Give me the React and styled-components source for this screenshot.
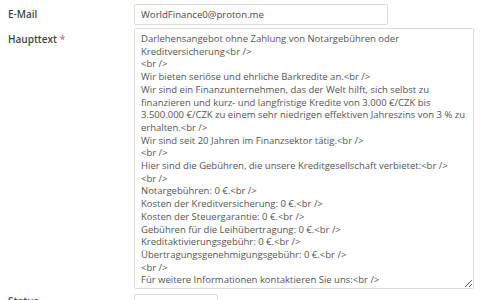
import React from "react";
import styled, { createGlobalStyle } from "styled-components";

const Global = createGlobalStyle`
  html, body { margin: 0; padding: 0; background: #fff; }
  body { font-family: "Open Sans", "Noto Sans", sans-serif; overflow: hidden; }
`;

const Form = styled.div`
  width: 480px;
  height: 300px;
  box-sizing: border-box;
  padding: 4px 6px 0 8px;
  overflow: hidden;
`;

const Row = styled.div`
  display: grid;
  grid-template-columns: 126px 1fr;
  align-items: start;
  margin-bottom: ${(p) => p.$gap || 3}px;
`;

const Label = styled.label`
  font-size: 10px;
  font-weight: 600;
  color: #444;
  line-height: 14px;
  padding-top: ${(p) => p.$top || 0}px;
`;

const Req = styled.span`
  color: #e86a6a;
  font-weight: 600;
`;

const Input = styled.input`
  box-sizing: border-box;
  width: 254px;
  height: 21px;
  border: 1px solid #dcdcdc;
  border-radius: 2px;
  padding: 0 6px;
  font-family: "Open Sans", sans-serif;
  font-size: 9.6px;
  color: #4a4a4a;
  outline: none;
`;

const Area = styled.textarea`
  box-sizing: border-box;
  width: 340px;
  height: 261px;
  border: 1px solid #dcdcdc;
  border-radius: 2px;
  padding: 4px 6px;
  font-family: "Open Sans", sans-serif;
  font-size: 9.5px;
  line-height: 12.7px;
  color: #555;
  white-space: pre;
  overflow-x: hidden;
  overflow-y: scroll;
  outline: none;
  resize: vertical;
  display: block;

  &::-webkit-scrollbar { width: 13px; }
  &::-webkit-scrollbar-track {
    background: #f7f7f7;
    border-left: 1px solid #e6e6e6;
    border-right: 1px solid #ececec;
  }
  &::-webkit-scrollbar-thumb {
    background: #c3c3c3;
    border-radius: 6px;
    border: 3px solid transparent;
    background-clip: padding-box;
  }
`;

const Select = styled.div`
  box-sizing: border-box;
  width: 84px;
  height: 20px;
  border: 1px solid #dcdcdc;
  border-radius: 2px;
  padding: 4px 6px;
  font-size: 9.5px;
  color: #555;
`;

const text = [
  "Darlehensangebot ohne Zahlung von Notargebühren oder",
  "Kreditversicherung<br />",
  "<br />",
  "Wir bieten seriöse und ehrliche Barkredite an.<br />",
  "Wir sind ein Finanzunternehmen, das der Welt hilft, sich selbst zu",
  "finanzieren und kurz- und langfristige Kredite von 3.000 €/CZK bis",
  "3.500.000 €/CZK zu einem sehr niedrigen effektiven Jahreszins von 3 % zu",
  "erhalten.<br />",
  "Wir sind seit 20 Jahren im Finanzsektor tätig.<br />",
  "<br />",
  "Hier sind die Gebühren, die unsere Kreditgesellschaft verbietet:<br />",
  "<br />",
  "Notargebühren: 0 €.<br />",
  "Kosten der Kreditversicherung: 0 €.<br />",
  "Kosten der Steuergarantie: 0 €.<br />",
  "Gebühren für die Leihübertragung: 0 €.<br />",
  "Kreditaktivierungsgebühr: 0 €.<br />",
  "Übertragungsgenehmigungsgebühr: 0 €.<br />",
  "<br />",
  "Für weitere Informationen kontaktieren Sie uns:<br />",
  "<br />",
  "E-Mail: WorldFinance0@proton.me<br />",
  "<br />",
  "Mit freundlichen Grüßen<br />",
  "World Finance<br />",
  "<br />",
  "Vielen Dank.",
].join("\n");

export default function App() {
  return (
    <>
      <Global />
      <Form>
        <Row>
          <Label $top={3}>E-Mail</Label>
          <Input readOnly value="WorldFinance0@proton.me" />
        </Row>
        <Row $gap={5}>
          <Label $top={4}>
            Haupttext <Req>*</Req>
          </Label>
          <Area readOnly value={text} />
        </Row>
        <Row>
          <Label $top={0}>Status</Label>
          <Select>Ausgewählt</Select>
        </Row>
      </Form>
    </>
  );
}
